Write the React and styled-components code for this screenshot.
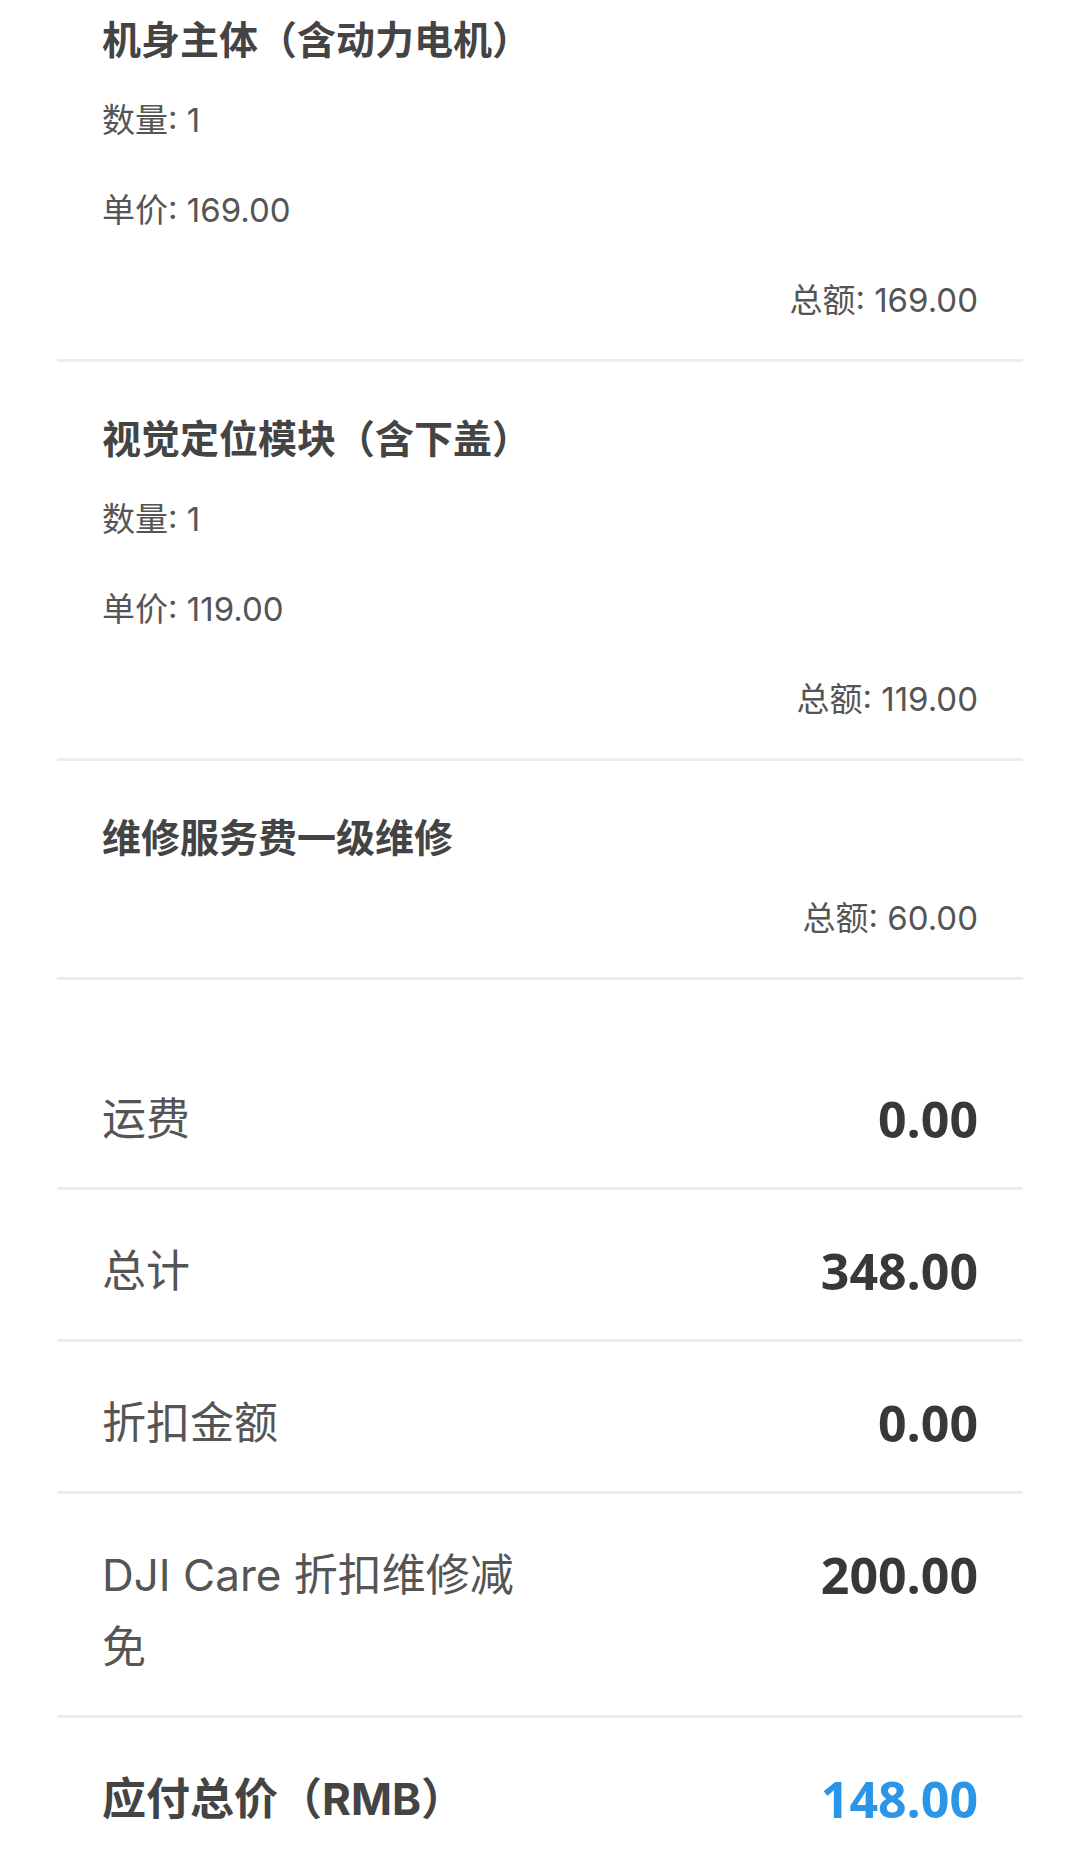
import React from "react";
import styled, { createGlobalStyle } from "styled-components";

const GlobalStyle = createGlobalStyle`
  html, body {
    margin: 0;
    padding: 0;
    background: #ffffff;
  }
  body {
    font-family: "Inter", "Noto Sans CJK SC", sans-serif;
    -webkit-font-smoothing: antialiased;
  }
`;

const Page = styled.div`
  width: 1080px;
  height: 1876px;
  box-sizing: border-box;
  padding: 0 57px;
  overflow: hidden;
  background: #ffffff;
`;

const ItemList = styled.ul`
  list-style: none;
  margin: -37px 0 0;
  padding: 0;
`;

const Item = styled.li`
  padding: 49px 45px 35px;
  border-bottom: 3px solid #ececec;
`;

const ItemTitle = styled.h3`
  margin: 0 0 28px;
  font-size: 39px;
  line-height: 56px;
  font-weight: 700;
  color: #444444;
`;

const Detail = styled.p`
  margin: 0;
  font-size: 33px;
  line-height: 48px;
  font-weight: 400;
  color: #555555;
  text-align: ${props => (props.$right ? "right" : "left")};

  & + & {
    margin-top: 42px;
  }
`;

const Summary = styled.div`
  margin-top: 58px;
`;

const SummaryRow = styled.div`
  display: flex;
  justify-content: space-between;
  align-items: flex-start;
  padding: 45px 45px 32px;
  border-bottom: ${props => (props.$last ? "none" : "3px solid #ececec")};
`;

const Label = styled.div`
  width: 50%;
  font-size: 44px;
  line-height: 72px;
  font-weight: ${props => (props.$strong ? 700 : 400)};
  color: ${props => (props.$strong ? "#444444" : "#555555")};
`;

const Value = styled.div`
  font-family: "Open Sans", "Noto Sans", sans-serif;
  font-size: 50px;
  line-height: 72px;
  font-weight: 700;
  color: ${props => (props.$accent ? "#2b95e8" : "#383838")};
`;

const items = [
  { name: "机身主体（含动力电机）", qty: 1, price: "169.00", total: "169.00" },
  { name: "视觉定位模块（含下盖）", qty: 1, price: "119.00", total: "119.00" },
  { name: "维修服务费一级维修", total: "60.00" },
];

const rows = [
  { label: "运费", value: "0.00" },
  { label: "总计", value: "348.00" },
  { label: "折扣金额", value: "0.00" },
  { label: "DJI Care 折扣维修减免", value: "200.00" },
  { label: "应付总价（RMB）", value: "148.00", strong: true, accent: true },
];

const App = () => {
  return (
    <Page>
      <GlobalStyle />
      <ItemList>
        {items.map(item => (
          <Item key={item.name}>
            <ItemTitle>{item.name}</ItemTitle>
            {item.qty && <Detail>数量: {item.qty}</Detail>}
            {item.price && <Detail>单价: {item.price}</Detail>}
            <Detail $right>总额: {item.total}</Detail>
          </Item>
        ))}
      </ItemList>
      <Summary>
        {rows.map((row, i) => (
          <SummaryRow key={row.label} $last={i === rows.length - 1}>
            <Label $strong={row.strong}>{row.label}</Label>
            <Value $accent={row.accent}>{row.value}</Value>
          </SummaryRow>
        ))}
      </Summary>
    </Page>
  );
};

export default App;
